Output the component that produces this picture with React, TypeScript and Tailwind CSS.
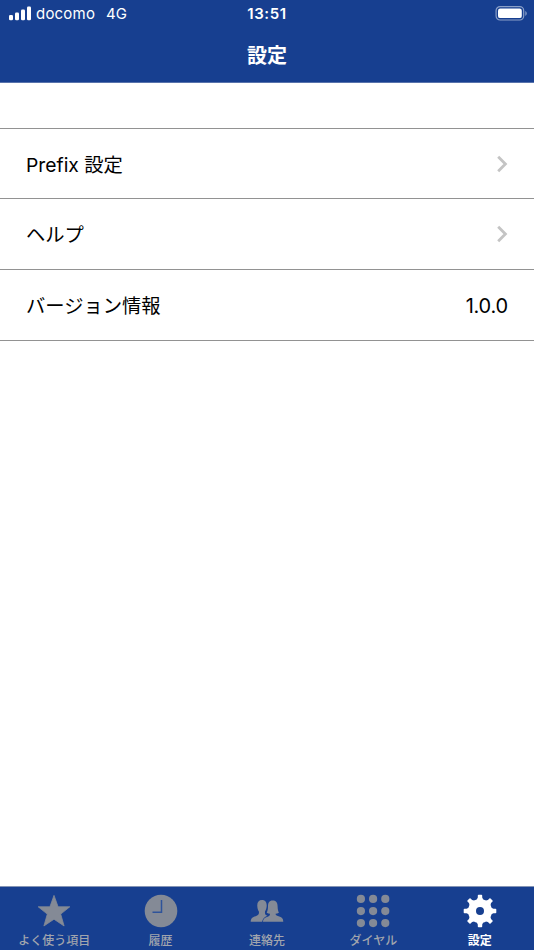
import React from 'react'
import clsx from 'clsx'

const StarIcon = () => (
  <svg width="34" height="34" viewBox="0 0 34 34" fill="currentColor" stroke="currentColor" strokeWidth="0.8" strokeLinejoin="round">
    <path d="M17 1.4L21.1 12.8H32.8L23.7 20.1L27.1 32L17 25.2L6.9 32L10.3 20.1L1.2 12.8H12.9Z" />
  </svg>
)

const ClockIcon = () => (
  <svg width="34" height="34" viewBox="0 0 34 34" fill="none">
    <circle cx="17" cy="17" r="16.3" fill="currentColor" />
    <path d="M17.5 6V18.3H8.5" stroke="#2e539a" strokeWidth="1.5" />
  </svg>
)

const ContactsIcon = () => (
  <svg width="34" height="34" viewBox="0 0 34 34" fill="currentColor">
    <path d="M12 6C15.4 6 16.9 8.4 16.7 12C16.5 14.6 16 16 15.1 17.2C14.8 18.8 15 20.3 15.9 21L17.4 21.7C14.6 22.8 12.6 24.6 12.1 27.8H0.7C0.7 24.4 2.6 23.1 5.6 22.2C8.4 21.3 9.3 20.4 8.9 17.4C8 16.2 7.4 14.4 7.3 12C7 8.4 8.7 6 12 6Z" />
    <path d="M22.7 6.6C26.6 6.6 27.5 9.3 27.6 12.3C27.7 15 28 17 28.9 18.8C27.8 19.4 26.7 19.7 25.6 19.7C25.6 21.1 26.4 21.6 28.6 22.3C31.6 23.1 33.3 24.4 33.3 27.8H12.9C13.1 24.9 14.7 23.6 17.6 22.7C19.2 22.2 20 21.4 20 19.7C18.9 19.7 17.8 19.4 16.7 18.8C17.7 17 17.9 15 18 12.3C18.1 9.3 18.9 6.6 22.7 6.6Z" />
  </svg>
)

const DialIcon = () => (
  <svg width="34" height="34" viewBox="0 0 34 34" fill="currentColor">
    {[4.9, 17.1, 29.1].map((y) =>
      [4.9, 17.1, 29.3].map((x) => <circle key={`${x}-${y}`} cx={x} cy={y} r="4.1" />)
    )}
  </svg>
)

const GearIcon = () => (
  <svg width="34" height="34" viewBox="0 0 34 34" fill="currentColor">
    {[0, 45, 90, 135].map((angle) => (
      <path
        key={angle}
        d="M14.8 1.5Q14.8 0.7 15.6 0.7H18.4Q19.2 0.7 19.2 1.5V3.6L21 7V27L19.2 30.4V32.5Q19.2 33.3 18.4 33.3H15.6Q14.8 33.3 14.8 32.5V30.4L13 27V7L14.8 3.6Z"
        transform={`rotate(${angle} 17 17)`}
      />
    ))}
    <circle cx="17" cy="17" r="12" />
    <circle cx="17" cy="17" r="4" fill="#173f90" />
  </svg>
)

const rows = [
  { label: 'Prefix 設定', height: 'h-[70px]' },
  { label: 'ヘルプ', height: 'h-[71px]' },
  { label: 'バージョン情報', height: 'h-[71px]', value: '1.0.0' },
]

const tabs = [
  { label: 'よく使う項目', icon: <StarIcon /> },
  { label: '履歴', icon: <ClockIcon /> },
  { label: '連絡先', icon: <ContactsIcon /> },
  { label: 'ダイヤル', icon: <DialIcon /> },
  { label: '設定', icon: <GearIcon />, active: true },
]

function StatusBar() {
  return (
    <div className="grid h-7 grid-cols-3 items-center text-[15px] leading-7">
      <div className="flex items-center pl-2 whitespace-pre">
        <svg width="24" height="16" viewBox="0 0 24 16" fill="currentColor">
          <rect x="1" y="9" width="4" height="5.2" rx="1.2" />
          <rect x="7" y="6.5" width="4" height="7.7" rx="1.2" />
          <rect x="13" y="3.5" width="4" height="10.7" rx="1.2" />
          <rect x="19" y="0.5" width="4" height="13.7" rx="1.2" />
        </svg>
        <span className="ml-1 tracking-[0.2px]">docomo</span>
        <span className="ml-[11px]">4G</span>
      </div>
      <div className="text-center font-semibold tracking-[0.6px]">13:51</div>
      <div className="flex justify-end pr-1.5">
        <svg width="33" height="16" viewBox="0 0 33 16">
          <rect x="1.1" y="0.6" width="27.6" height="13.4" rx="4" fill="none" stroke="#8ba0c8" strokeWidth="1.2" />
          <rect x="3" y="2.5" width="23.8" height="9.6" rx="2.2" fill="#fff" />
          <path d="M30.3 4.9C32.2 5.7 32.2 8.9 30.3 9.7Z" fill="#8ba0c8" />
        </svg>
      </div>
    </div>
  )
}

export default function App() {
  return (
    <div className="flex h-[950px] w-[534px] flex-col overflow-hidden bg-white font-['Inter','Noto_Sans_CJK_JP',sans-serif] text-black">
      {/* Header */}
      <header className="h-[83px] shrink-0 border-b border-[#5873ac] bg-[#173f90] text-white">
        <StatusBar />
        <h1 className="text-center text-[20px] leading-14 font-bold">設定</h1>
      </header>

      {/* Settings list */}
      <main className="flex-1 pt-[45px]">
        <ul className="border-t border-[#929292]">
          {rows.map((row) => (
            <li
              key={row.label}
              className={clsx('flex items-center justify-between border-b border-[#929292] px-[26px]', row.height)}
            >
              <span className="pt-[3px] text-[19.3px]">{row.label}</span>
              {row.value ? (
                <span className="pt-[2px] text-[20px] tracking-[-0.2px]">{row.value}</span>
              ) : (
                <svg width="12" height="18" viewBox="0 0 12 18" fill="none">
                  <path d="M2.2 1.8L9.4 9L2.2 16.2" stroke="#c4c4c4" strokeWidth="2.8" />
                </svg>
              )}
            </li>
          ))}
        </ul>
      </main>

      {/* Tab bar */}
      <nav className="grid h-16 shrink-0 grid-cols-5 border-t border-[#8494b5] bg-[#173f90] px-px">
        {tabs.map((tab) => (
          <div key={tab.label} className="flex flex-col items-center pt-[7px]">
            <div className={tab.active ? 'text-white' : 'text-[#848a96]'}>{tab.icon}</div>
            <span
              className={clsx(
                'mt-[5px] text-[12px] leading-4 whitespace-nowrap',
                tab.active ? 'font-bold text-white' : 'font-medium text-[#a1a5ad]'
              )}
            >
              {tab.label}
            </span>
          </div>
        ))}
      </nav>
    </div>
  )
}
